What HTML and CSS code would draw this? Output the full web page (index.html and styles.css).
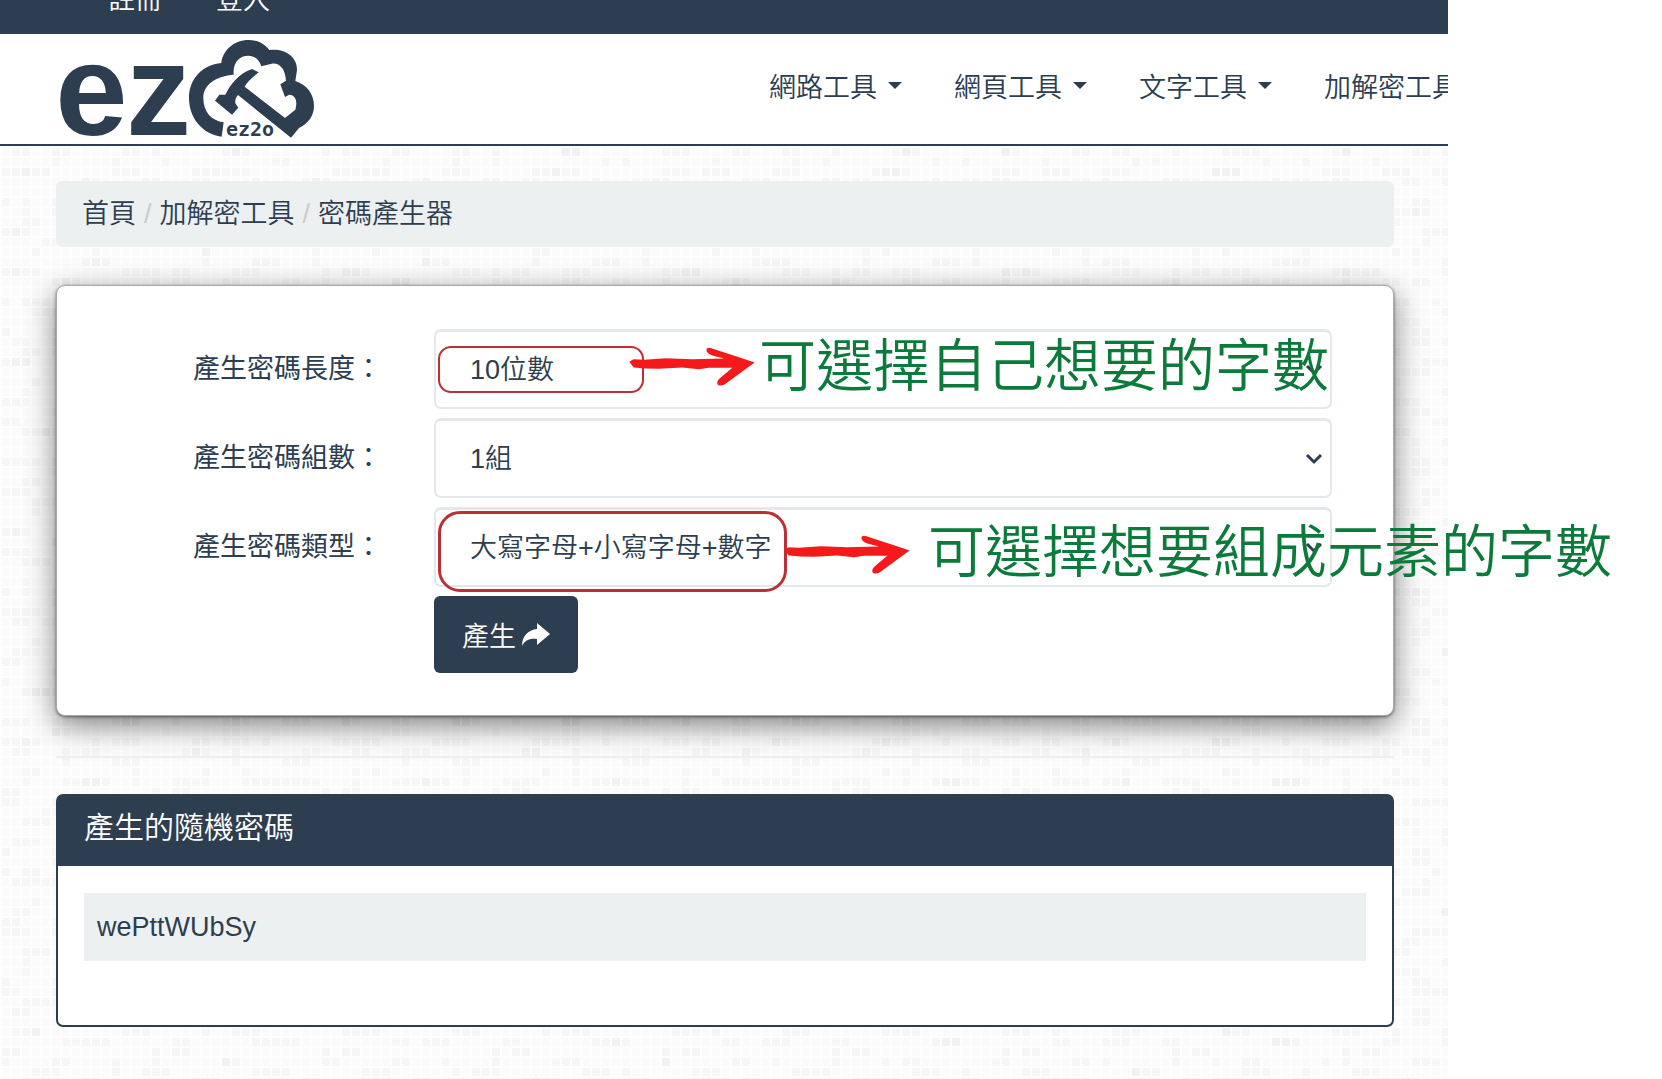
FILE: index.html
```html
<!doctype html>
<html lang="zh-TW">

<head>
  <meta charset="UTF-8">
  <meta name="viewport" content="width=device-width, initial-scale=1.0">
  <title>密碼產生器</title>
  <link rel="stylesheet" href="styles.css">
</head>

<body>
  <svg class="defs" aria-hidden="true">
    <symbol id="arrow" viewBox="0 0 378 116">
      <path d="M1 44 L14 36 L45 38 L110 33 L190 36 L285 34 L250 25 C240 21 230 14 233 5 C238 -1 247 3 256 6 L330 30 L377 46 L352 64 L300 102 C290 109 280 119 268 114 C260 106 268 96 276 90 L310 62 L240 62 L210 66 L160 61 L90 65 L50 64 L14 61 Z" />
    </symbol>
  </svg>

  <div class="page">
    <div class="topbar">
      <a href="#">註冊</a>
      <a href="#">登入</a>
    </div>

    <header class="header">
      <a class="logo" href="#" aria-label="ez2o">
        <svg viewBox="177 115 771 300" width="257" height="100">
          <text class="logo-big" x="166 378" y="404">ez</text>
          <path d="M665 408 C605 400 567 350 567 292 C567 235 607 192 664 187 C668 148 703 118 745 118 C773 118 795 130 808 148 C850 142 892 165 891 208 L886 241 C920 252 942 280 942 315 C942 345 925 368 897 382 L873 411 L714 283 C706 292 705 300 706 308 L715 321 L696 342 L645 300 L658 282 L676 282 C692 250 715 220 756 205 L776 215 C758 230 742 244 734 258 L855 352 L886 327 C893 305 888 283 868 282 L855 289 L841 251 L858 240 C856 210 843 186 815 189 L784 197 C778 178 765 165 745 165 C718 165 698 185 701 222 C650 226 610 250 610 292 C610 335 635 360 671 365 Z" />
          <text class="logo-small" x="678" y="405">ez2o</text>
        </svg>
      </a>
      <nav class="nav">
        <a href="#">網路工具<span class="caret"></span></a>
        <a href="#">網頁工具<span class="caret"></span></a>
        <a href="#">文字工具<span class="caret"></span></a>
        <a href="#">加解密工具</a>
      </nav>
    </header>

    <main class="container">
      <div class="breadcrumb">
        <a href="#">首頁</a><span>/</span><a href="#">加解密工具</a><span>/</span><a href="#">密碼產生器</a>
      </div>

      <form class="card">
        <label for="length">產生密碼長度：</label>
        <div class="field">
          <select id="length">
            <option>10位數</option>
          </select>
          <div class="mark mark-length"></div>
          <svg class="arrow arrow-length"><use href="#arrow" /></svg>
          <p class="note note-length">可選擇自己想要的字數</p>
        </div>

        <label for="count">產生密碼組數：</label>
        <div class="field">
          <select id="count">
            <option>1組</option>
          </select>
        </div>

        <label for="type">產生密碼類型：</label>
        <div class="field">
          <select id="type">
            <option>大寫字母+小寫字母+數字</option>
          </select>
          <div class="mark mark-type"></div>
          <svg class="arrow arrow-type"><use href="#arrow" /></svg>
          <p class="note note-type">可選擇想要組成元素的字數</p>
        </div>

        <button class="btn" type="button">產生
          <svg viewBox="0 0 28 23" width="28" height="23">
            <path d="M15 0 L28 11 L15 22 V16 C8 15 3 17 0 23 C0 13 6 7 15 6 Z" />
          </svg>
        </button>
      </form>

      <hr>

      <section class="panel">
        <h2>產生的隨機密碼</h2>
        <div class="panel-body">
          <div class="result">wePttWUbSy</div>
        </div>
      </section>
    </main>
  </div>
</body>

</html>
```
FILE: styles.css
```css
* {
  margin: 0;
  padding: 0;
  box-sizing: border-box;
}

body {
  background-color: #fff;
  color: #2c3e50;
  font-family: "Liberation Sans", "Noto Sans CJK TC", sans-serif;
  font-size: 27px;
  font-weight: 350;
}

a {
  color: inherit;
  text-decoration: none;
}

.defs {
  display: none;
}

/* 格紋背景: 白色細線 + 兩層不同週期的小方塊 */
.page {
  margin-right: 214px;
  min-height: 100vh;
  background-color: #fbfbfb;
  background-image:
    linear-gradient(#fefefe 2px, transparent 2px),
    linear-gradient(90deg, #fefefe 2px, transparent 2px),
    url("data:image/svg+xml,%3Csvg xmlns='http://www.w3.org/2000/svg' width='170' height='130'%3E%3Cpath fill='%23000' fill-opacity='.018' d='M10 0h20v10h-20zM60 0h10v20h-10zM110 10h30v10h-30zM30 20h10v10h-10zM80 30h30v10h-30zM0 40h20v10h-20zM150 40h10v20h-10zM50 50h20v10h-20zM110 60h10v10h-10zM20 70h30v10h-30zM80 80h10v10h-10zM140 80h20v10h-20zM0 100h10v10h-10zM50 100h20v20h-20zM110 100h30v10h-30zM20 120h20v10h-20zM90 120h10v10h-10z'/%3E%3C/svg%3E"),
    url("data:image/svg+xml,%3Csvg xmlns='http://www.w3.org/2000/svg' width='110' height='190'%3E%3Cpath fill='%23000' fill-opacity='.014' d='M0 10h30v10h-30zM50 0h10v10h-10zM80 20h20v10h-20zM20 40h10v20h-10zM60 50h40v10h-40zM0 70h20v10h-20zM40 80h20v10h-20zM90 90h10v20h-10zM10 110h30v10h-30zM60 120h20v10h-20zM0 140h10v10h-10zM30 150h30v10h-30zM80 160h20v10h-20zM10 180h20v10h-20z'/%3E%3C/svg%3E");
  background-size: 10px 10px, 10px 10px, 170px 130px, 110px 190px;
}

/* 頂欄只露出下半部 */
.topbar {
  display: flex;
  gap: 54px;
  height: 68px;
  margin-top: -34px;
  padding-left: 108px;
  background-color: #2c3e50;
  color: #fff;
  line-height: 68px;
}

.header {
  display: flex;
  align-items: center;
  height: 112px;
  padding-left: 59px;
  overflow: hidden;
  background-color: #fff;
  border-bottom: 2px solid #2c3e50;
}

.logo {
  flex: none;
  height: 100px;
}

.logo svg {
  fill: #2c3e50;
}

.logo-big {
  font-family: "Liberation Sans", sans-serif;
  font-size: 390px;
  font-weight: 700;
}

.logo-small {
  font-family: "DejaVu Sans Mono", monospace;
  font-size: 60px;
  font-weight: 700;
}

.nav {
  display: flex;
  flex: none;
  gap: 52px;
  margin-left: 453px;
  padding-bottom: 8px;
  white-space: nowrap;
}

.nav a {
  display: flex;
  align-items: center;
  gap: 11px;
}

.caret {
  border: 7px solid transparent;
  border-top-color: #2c3e50;
  border-bottom: 0;
}

.container {
  padding: 35px 54px 52px 56px;
}

.breadcrumb {
  height: 66px;
  padding: 0 26px;
  border-radius: 6px;
  background-color: #ecf0f1;
  line-height: 66px;
}

.breadcrumb span {
  padding: 0 8px;
  color: #ccc;
}

.card {
  display: grid;
  grid-template-columns: 325px 1fr;
  column-gap: 52px;
  row-gap: 9px;
  align-items: center;
  margin-top: 38px;
  padding: 43px 61px 42px 0;
  border: 1px solid #aaa;
  border-radius: 9px;
  background-color: #fff;
  box-shadow: 0 1px 3px rgba(0, 0, 0, .5), 0 9px 30px rgba(0, 0, 0, .5);
}

.card label {
  padding-bottom: 6px;
  font-weight: 400;
  text-align: right;
}

.field {
  position: relative;
}

.field select {
  display: block;
  width: 100%;
  height: 80px;
  padding: 0 34px;
  border: 2px solid #e3e8eb;
  border-top-width: 3px;
  border-radius: 7px;
  appearance: none;
  background: #fff url("data:image/svg+xml,%3Csvg xmlns='http://www.w3.org/2000/svg' width='18' height='12'%3E%3Cpath fill='none' stroke='%232c3e50' stroke-width='3' d='M2 2l7 7 7-7'/%3E%3C/svg%3E") no-repeat right 7px center;
  color: #2c3e50;
  font: inherit;
}

/* 紅框、箭頭與綠色說明文字 */
.mark,
.arrow,
.note {
  position: absolute;
  pointer-events: none;
}

.mark {
  border: 2px solid #bb2f36;
}

.mark-length {
  top: 17px;
  left: 4px;
  width: 206px;
  height: 47px;
  border-radius: 13px;
}

.mark-type {
  top: 4px;
  left: 4px;
  width: 349px;
  height: 81px;
  border-width: 3px;
  border-radius: 22px;
}

.arrow {
  width: 126px;
  height: 39px;
  fill: #f6191c;
}

.arrow-length {
  top: 18px;
  left: 195px;
}

.arrow-type {
  top: 28px;
  left: 350px;
}

.note {
  color: #0b7a3b;
  font-family: "Noto Sans CJK TC", sans-serif;
  font-size: 57px;
  line-height: 80px;
  white-space: nowrap;
}

.note-length {
  top: -8px;
  left: 325px;
}

.note-type {
  top: 0;
  left: 494px;
}

.btn {
  display: flex;
  grid-column: 2;
  align-items: center;
  justify-self: start;
  gap: 6px;
  height: 77px;
  padding: 0 28px;
  border: 0;
  border-radius: 6px;
  background-color: #2c3e50;
  color: #fff;
  font: inherit;
}

.btn svg {
  fill: #fff;
}

hr {
  margin: 40px 0 36px;
  border: 0;
  border-top: 2px solid #eee;
}

.panel {
  border: 2px solid #2c3e50;
  border-radius: 7px;
  background-color: #fff;
}

.panel h2 {
  height: 70px;
  padding: 0 26px;
  background-color: #2c3e50;
  color: #fff;
  font-size: 30px;
  font-weight: 350;
  line-height: 64px;
}

.panel-body {
  padding: 27px 26px 64px;
}

.result {
  padding: 0 13px;
  background-color: #ecf0f1;
  line-height: 68px;
}
```
